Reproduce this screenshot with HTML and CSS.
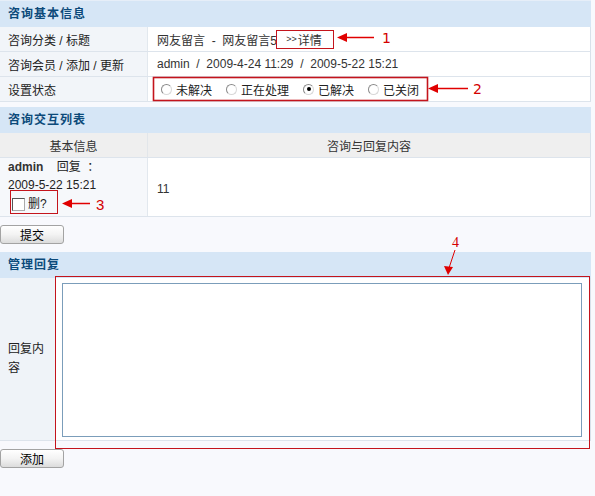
FILE: index.html
```html
<!DOCTYPE html>
<html lang="zh">
<head>
<meta charset="utf-8">
<title>咨询管理</title>
<link rel="stylesheet" href="styles.css">
</head>
<body>
<div class="page">
  <div class="panel">
    <div class="head first">咨询基本信息</div>
    <div class="row">
      <div class="lab">咨询分类 / 标题</div>
      <div class="val">网友留言&nbsp;&nbsp;-&nbsp;&nbsp;网友留言5 <a class="more"><span class="gt">&gt;&gt;</span>详情</a></div>
    </div>
    <div class="row">
      <div class="lab">咨询会员 / 添加 / 更新</div>
      <div class="val">admin&nbsp;&nbsp;/&nbsp;&nbsp;2009-4-24 11:29&nbsp;&nbsp;/&nbsp;&nbsp;2009-5-22 15:21</div>
    </div>
    <div class="row">
      <div class="lab">设置状态</div>
      <div class="val radios">
        <span class="opt"><span class="radio"></span>未解决</span>
        <span class="opt"><span class="radio"></span>正在处理</span>
        <span class="opt"><span class="radio on"></span>已解决</span>
        <span class="opt"><span class="radio"></span>已关闭</span>
      </div>
    </div>
  </div>

  <div class="panel sp">
    <div class="head">咨询交互列表</div>
    <div class="row colhead">
      <div class="lab">基本信息</div>
      <div class="val">咨询与回复内容</div>
    </div>
    <div class="row item">
      <div class="lab">
        <div class="line"><b class="user">admin</b>&nbsp;&nbsp;&nbsp;&nbsp;回复&nbsp;&nbsp;：</div>
        <div class="line">2009-5-22 15:21</div>
        <div class="line del"><span class="check"></span>删?</div>
      </div>
      <div class="val">11</div>
    </div>
  </div>
  <button class="btn">提交</button>

  <div class="panel sp2">
    <div class="head">管理回复</div>
    <div class="row reply">
      <div class="lab">回复内容</div>
      <div class="val"><textarea class="area"></textarea></div>
    </div>
  </div>
  <button class="btn">添加</button>

  <svg class="notes" width="595" height="496" viewBox="0 0 595 496">
    <g fill="none" stroke="#c4141c">
      <rect x="276.5" y="30.5" width="57" height="18"/>
      <rect x="153.5" y="77.5" width="274" height="23" stroke-width="1.6"/>
      <rect x="10.5" y="190.5" width="47" height="23"/>
      <rect x="55.5" y="276.5" width="534" height="172"/>
    </g>
    <g stroke="#e00000" stroke-width="1.5" fill="#e00000">
      <line x1="346" y1="37.5" x2="374" y2="37.5"/>
      <polygon points="337,37.5 347,33 347,42" stroke="none"/>
      <line x1="437" y1="88.5" x2="468" y2="88.5"/>
      <polygon points="428,88.5 438,84 438,93" stroke="none"/>
      <line x1="71" y1="203.5" x2="90" y2="203.5"/>
      <polygon points="62,203.5 72,199 72,208" stroke="none"/>
      <line x1="455" y1="250" x2="449" y2="268" stroke-width="1"/>
      <polygon points="444,266 453,267 448,275" stroke="none"/>
    </g>
    <g fill="#d40000" class="num">
      <text x="382" y="43">1</text>
      <text x="473" y="94">2</text>
      <text x="96" y="210" class="n3">3</text>
      <text x="452" y="247" class="n4">4</text>
    </g>
  </svg>
</div>
</body>
</html>
```

FILE: styles.css
```css
* { box-sizing: border-box; }
html, body {
  margin: 0;
  padding: 0;
  background: #f8f9fd;
}
body {
  font-family: "Liberation Sans", "Noto Sans CJK SC", sans-serif;
  font-size: 12px;
  color: #222;
}
.page {
  position: relative;
  width: 595px;
  height: 496px;
  overflow: hidden;
}
.panel {
  width: 591px;
}
.panel.sp { margin-top: 5px; }
.panel.sp2 { margin-top: 8px; }
.head {
  height: 26px;
  line-height: 26px;
  padding-left: 8px;
  background: #d6e6f6;
  color: #0c4a7a;
  font-weight: bold;
  letter-spacing: 1px;
}
.head.first {
  height: 27px;
  line-height: 27px;
  border-top: 1px solid #e6eef8;
}
.row {
  display: flex;
  height: 25px;
  border-bottom: 1px solid #dde4ec;
  border-right: 1px solid #d8e1ea;
}
.lab {
  width: 148px;
  flex: none;
  padding-left: 8px;
  background: #f2f5f9;
  border-right: 1px solid #e2e8ee;
  display: flex;
  align-items: center;
  color: #222;
}
.val {
  flex: 1;
  background: #fff;
  padding-left: 9px;
  display: flex;
  align-items: center;
  color: #333;
  white-space: pre;
}
.more {
  margin-left: 6px;
  color: #333;
  display: inline-flex;
  align-items: center;
}
.gt {
  font-size: 9px;
  margin-right: 1px;
}
.radios {
  padding-left: 13px;
}
.opt {
  display: inline-flex;
  align-items: center;
  margin-right: 14px;
  color: #222;
}
.radio {
  width: 11px;
  height: 11px;
  border-radius: 50%;
  border: 1px solid #8a8a8a;
  border-right-color: #d8d8d8;
  border-bottom-color: #d8d8d8;
  background: #fff;
  margin-right: 4px;
  position: relative;
}
.radio.on::after {
  content: "";
  position: absolute;
  left: 2.5px;
  top: 2.5px;
  width: 4px;
  height: 4px;
  border-radius: 50%;
  background: #000;
}
.colhead .lab,
.colhead .val {
  background: #efefef;
  justify-content: center;
  padding-left: 0;
  color: #333;
}
.colhead .lab { border-right: 1px solid #e2e6ea; }
.row.item { height: 59px; }
.item .lab {
  flex-direction: column;
  align-items: flex-start;
  justify-content: flex-start;
  background: #f6f8fb;
}
.line {
  height: 18px;
  line-height: 18px;
  display: flex;
  align-items: center;
}
.user { font-weight: bold; color: #333; }
.del { padding-left: 4px; margin-top: 1px; }
.check {
  width: 13px;
  height: 13px;
  border: 1px solid #555;
  border-right-color: #aaa;
  border-bottom-color: #aaa;
  background: #fff;
  margin-right: 3px;
}
.item .val { padding-top: 4px; }
.btn {
  display: block;
  margin: 8px 0 0 0;
  width: 64px;
  height: 19px;
  padding: 0;
  border: 1px solid #a3a3a3;
  border-radius: 3px;
  background: linear-gradient(#ffffff, #f3f3f3 50%, #dcdcdc);
  font-family: "Noto Sans CJK SC", sans-serif;
  font-size: 12px;
  line-height: 16px;
  color: #000;
}
.row.reply { height: 163px; }
.reply .lab {
  width: 55px;
  border-right: none;
  background: #eff3f8;
  line-height: 19px;
  padding-right: 8px;
}
.reply .val {
  padding: 5px 0 0 7px;
  align-items: flex-start;
}
.area {
  display: block;
  width: 520px;
  height: 154px;
  margin: 0;
  border: 1px solid #7b9dba;
  resize: none;
  background: #fff;
  outline: none;
}
.notes {
  position: absolute;
  left: 0;
  top: 0;
  pointer-events: none;
}
.num text {
  font-family: "DejaVu Sans", sans-serif;
  font-size: 14px;
}
.num .n3 {
  font-family: "Liberation Sans", sans-serif;
  font-size: 15px;
}
.num .n4 {
  font-family: "Liberation Serif", serif;
  font-size: 14px;
}
```
